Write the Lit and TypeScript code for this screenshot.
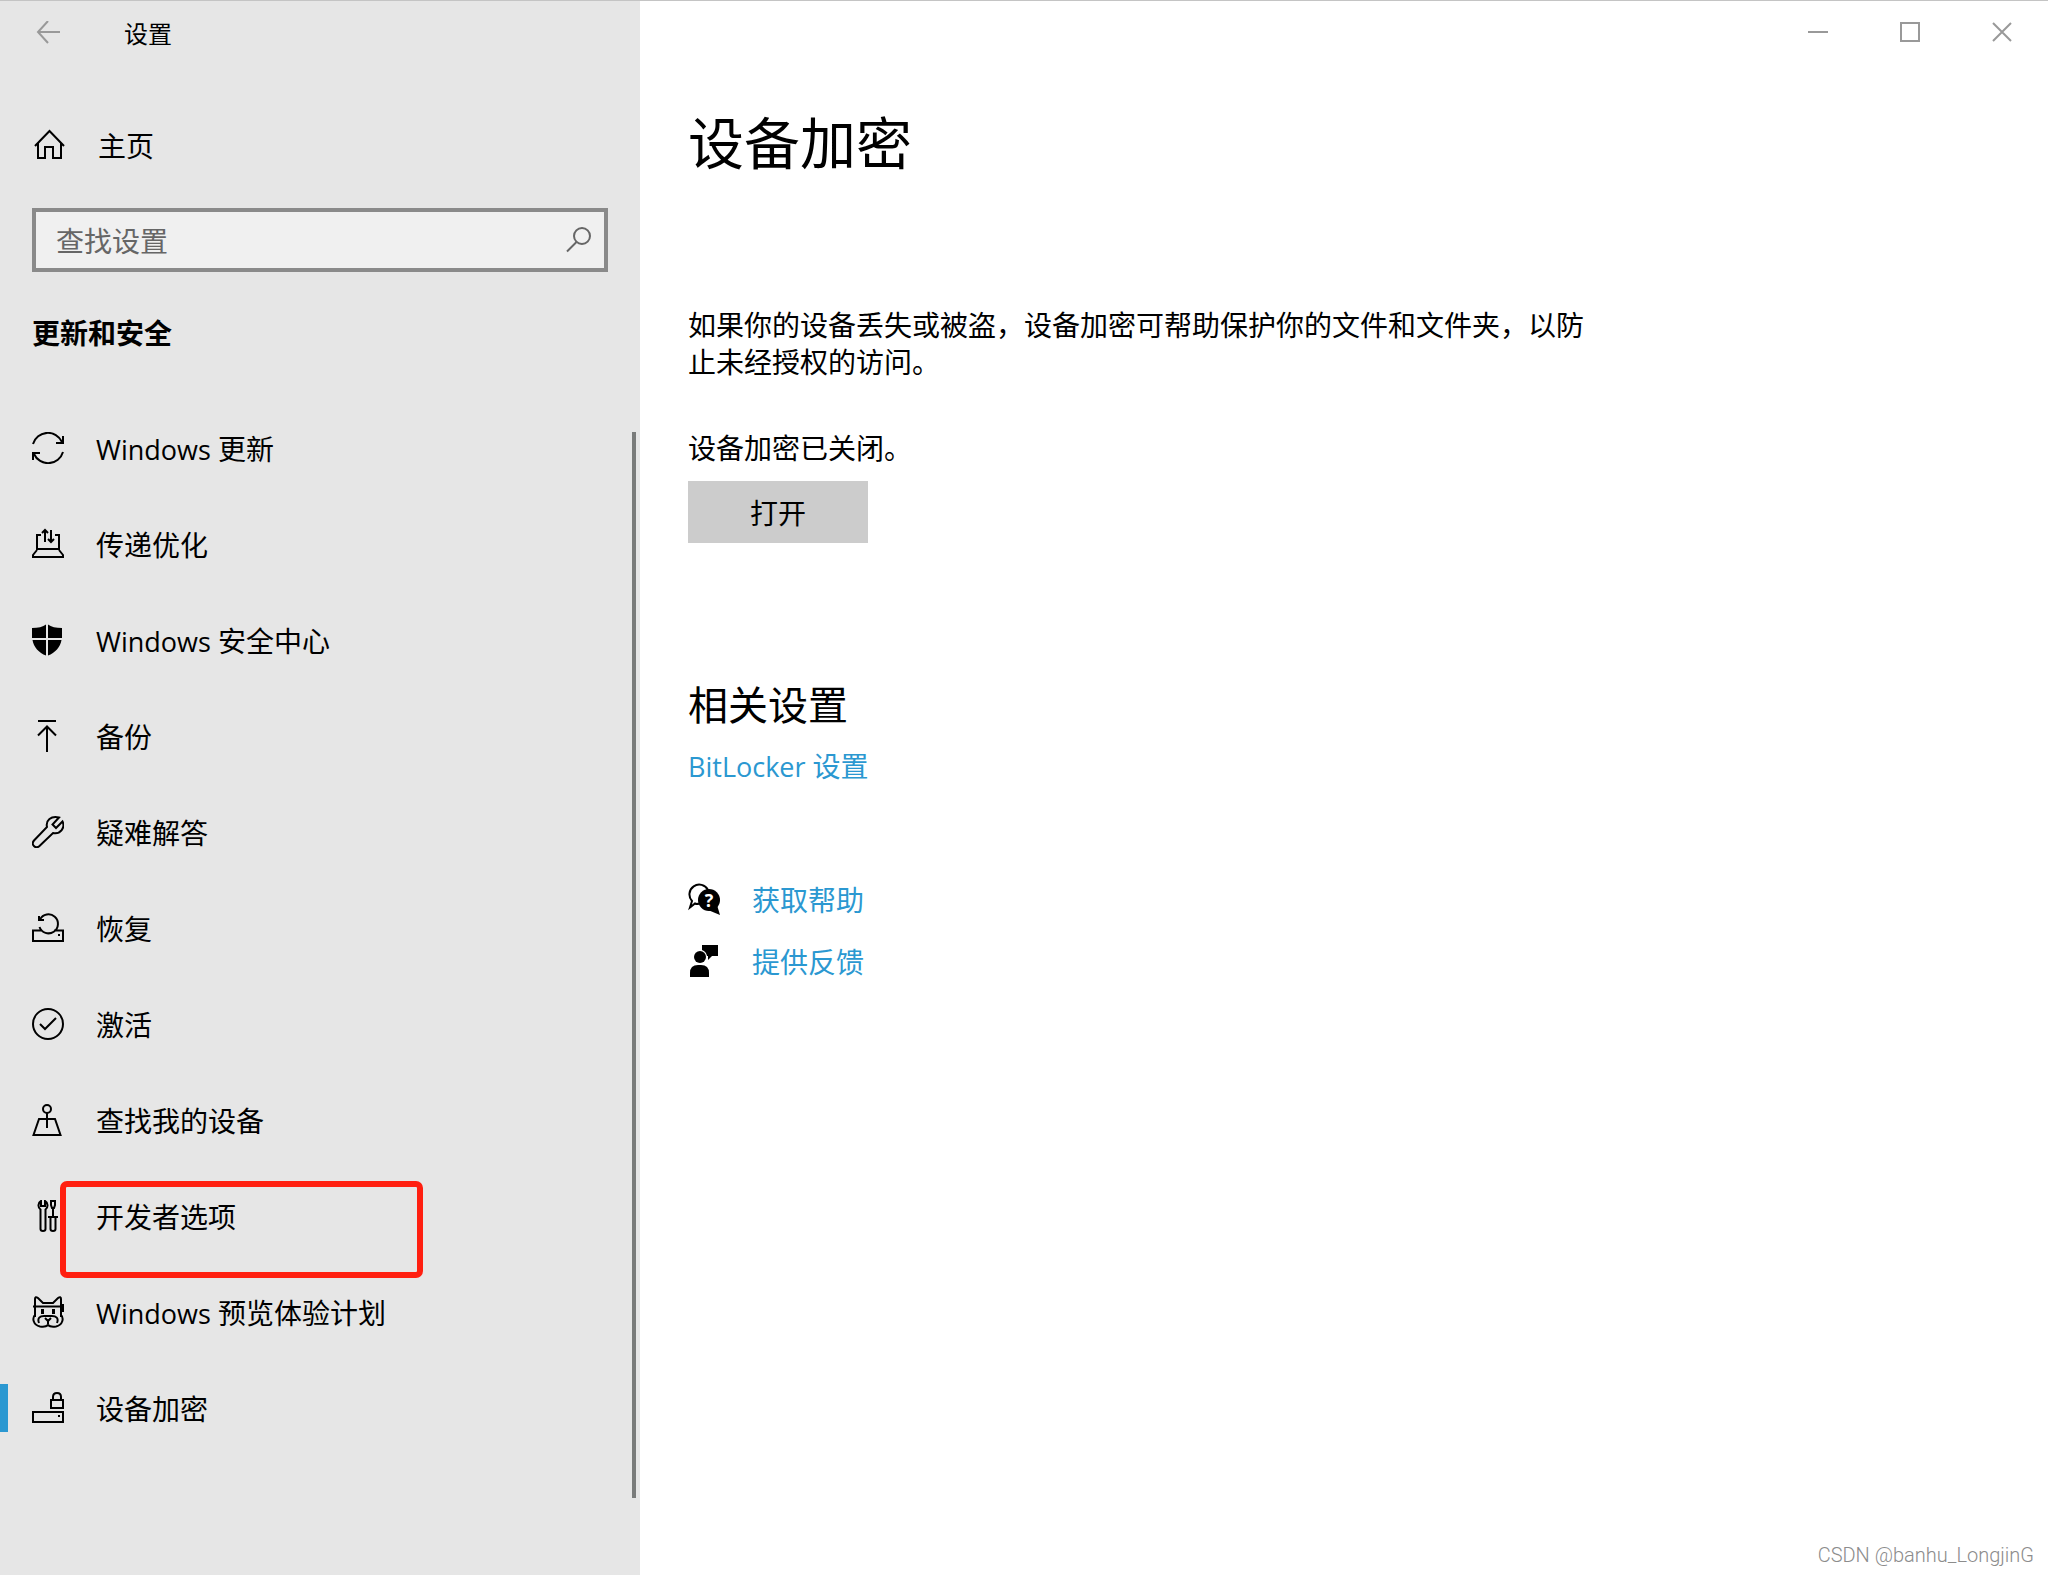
import { LitElement, html, css, svg, nothing } from "lit";
import type { SVGTemplateResult } from "lit";
import { customElement } from "lit/decorators.js";
import { classMap } from "lit/directives/class-map.js";

interface NavItem {
  latin?: string;
  label: string;
  icon: SVGTemplateResult;
  current?: boolean;
  marked?: boolean;
}

const icons = {
  sync: svg`<path d="M1 12A15.500 15.500 0 0 1 30 10M31 4v7h-7M31 20A15.500 15.500 0 0 1 2 22M1 28v-7h7"/>`,
  delivery: svg`<path d="M9 7H5v14M23 7h4v14M4 21h24M5 22l-4 5v2h30v-2l-4-5M13 2v12M10 5l3-3 3 3M19 2v12M16 11l3 3 3-3"/>`,
  shield: svg`<path class="solid" d="M14 0.500C11 3 6 4 0 4v10h14zM16 0.500C19 3 24 4 30 4v10H16zM0.500 16H14v15.500C7 29 1.500 23 0.500 16zM29.500 16H16v15.500C23 29 28.500 23 29.500 16z"/>`,
  backup: svg`<path d="M6 1h18M15 6v26M6 15.500L15 6.500l9 9"/>`,
  wrench: svg`<path d="M15 11C13.500 4.500 19-0.500 27 1.500L20.500 8.500l3.500 3.500 6.500-6.500c3 6-2 13-9.500 11.500L7.500 30c-4 3.500-9-1.500-5.500-5.500z"/>`,
  recovery: svg`<path d="M7 4v4h5M8 7.500A9.500 9.500 0 1 1 7.500 15M10 18.500H1V29h30V18.500H22"/><path class="solid" d="M26 22h2v2h-2z"/>`,
  activate: svg`<circle cx="16" cy="16" r="15"/><path d="M8 16l5 5 11-11"/>`,
  locate: svg`<circle cx="15" cy="5" r="4"/><path d="M15 9v15M7 15L1.500 31h27L23 15z"/>`,
  tools: svg`<path d="M8.500 9.500V29q0 2 2.500 2t2.500-2V9.500c3-2 2.500-7 -0.500-8.500v5h-4v-5c-3 1.500-3.500 6.500-0.500 8.500zM19 1h4v4l-1 3h-2l-1-3zM21 8v9M16 17h10M18.500 17v12q0 2 2.500 2t2.500-2V17"/>`,
  cat: svg`<path d="M3 21V3q0-3 3-1l5 5h10l5-5q3-2 3 1v18M1 10.500h30M31 8v8M3 19c-3 3-2 10 5 11.500 3 .5 6 .5 8-1.500 2 2 5 2 8 1.500 7-1.500 8-8.500 5-11.500M7 27c-2-5 1-7 5-7h8c4 0 7 2 5 7M16 28v-3M13 22l3 3 3-3"/><path class="solid" d="M9 13h3v5H9zM20 13h3v5h-3z"/>`,
  driveLock: svg`<path d="M19 8h12v8H19zM21 8V5q0-4 4-4t4 4v3M1 20h30v10H1z"/><path class="solid" d="M26 23h2v2h-2z"/>`,
};

const NAV: NavItem[] = [
  { latin: "Windows ", label: "更新", icon: icons.sync },
  { label: "传递优化", icon: icons.delivery },
  { latin: "Windows ", label: "安全中心", icon: icons.shield },
  { label: "备份", icon: icons.backup },
  { label: "疑难解答", icon: icons.wrench },
  { label: "恢复", icon: icons.recovery },
  { label: "激活", icon: icons.activate },
  { label: "查找我的设备", icon: icons.locate },
  { label: "开发者选项", icon: icons.tools, marked: true },
  { latin: "Windows ", label: "预览体验计划", icon: icons.cat },
  { label: "设备加密", icon: icons.driveLock, current: true },
];

@customElement("app-root")
export class AppRoot extends LitElement {
  static styles = css`
    :host {
      display: block;
      font-family: "Noto Sans CJK SC", sans-serif;
      font-size: 28px;
      line-height: 36px;
      color: #000;
    }
    *,
    ::before,
    ::after {
      box-sizing: border-box;
    }
    h1,
    h2,
    p,
    ul {
      margin: 0;
      padding: 0;
    }
    a {
      color: inherit;
      text-decoration: none;
    }
    button {
      border: 0;
      padding: 0;
      background: none;
      font: inherit;
      color: inherit;
    }
    svg {
      display: block;
      flex: none;
      fill: none;
      stroke: currentColor;
      stroke-width: 2;
    }
    .solid {
      fill: currentColor;
      stroke: none;
    }
    .latin {
      font-family: "Open Sans", sans-serif;
      font-size: 27px;
      line-height: 1;
      white-space: pre;
    }
    .window {
      position: relative;
      display: flex;
      min-height: 100vh;
      background: #fff;
      border-top: 1px solid #c4c4c4;
    }
    .sidebar {
      flex: 0 0 640px;
      display: flex;
      flex-direction: column;
      background: #e6e6e6;
    }
    .titlebar {
      display: flex;
      align-items: center;
      gap: 64px;
      height: 64px;
      padding-left: 36px;
      font-size: 24px;
    }
    .back {
      color: #999;
    }
    .home {
      display: flex;
      align-items: center;
      gap: 32px;
      height: 96px;
      margin-top: 32px;
      padding: 0 32px;
    }
    .search {
      display: flex;
      align-items: center;
      height: 64px;
      margin: 15px 32px 0;
      padding: 0 12px 0 20px;
      border: 4px solid #8a8a8a;
      background: #f0f0f0;
      color: #666;
    }
    .search input {
      flex: 1;
      min-width: 0;
      padding: 0;
      border: 0;
      outline: 0;
      background: none;
      font: inherit;
      color: #666;
    }
    .search input::placeholder {
      color: #666;
      opacity: 1;
    }
    .section {
      height: 128px;
      padding: 42px 32px 0;
      font-size: 28px;
      font-weight: 700;
      line-height: 36px;
    }
    .scroller {
      flex: 1;
      display: flex;
      padding-right: 4px;
    }
    .nav {
      flex: 1;
    }
    .nav ul {
      list-style: none;
    }
    .nav li {
      position: relative;
    }
    .nav a {
      display: flex;
      align-items: center;
      gap: 32px;
      height: 96px;
      padding: 0 32px;
    }
    .current::before {
      content: "";
      position: absolute;
      left: 0;
      top: 24px;
      width: 8px;
      height: 48px;
      background: #2b98d1;
    }
    .marked::after {
      content: "";
      position: absolute;
      left: 60px;
      top: 13px;
      width: 363px;
      height: 97px;
      border: 6px solid #ff1f10;
      border-radius: 7px;
      pointer-events: none;
    }
    .thumb {
      width: 4px;
      margin: 32px 0 77px;
      background: #7a7c7b;
    }
    .content {
      flex: 1;
      min-width: 0;
      display: flex;
      flex-direction: column;
      padding-left: 48px;
    }
    .controls {
      display: flex;
      justify-content: flex-end;
      height: 62px;
      margin-bottom: 41px;
      color: #999;
    }
    .controls button {
      display: grid;
      place-items: center;
      width: 92px;
    }
    h1 {
      font-size: 56px;
      font-weight: 400;
      line-height: 72px;
    }
    .intro {
      max-width: 912px;
      margin-top: 130px;
      line-height: 37px;
    }
    .status {
      margin-top: 49px;
    }
    .action {
      width: 180px;
      height: 62px;
      margin-top: 16px;
      background: #ccc;
    }
    .subhead {
      font-size: 40px;
      font-weight: 400;
      line-height: 48px;
      margin-top: 136px;
    }
    .link {
      color: #2b98d1;
    }
    .related {
      margin-top: 20px;
    }
    .support {
      display: flex;
      flex-direction: column;
      gap: 26px;
      margin-top: 98px;
    }
    .support a {
      display: flex;
      align-items: center;
      align-self: flex-start;
      gap: 32px;
    }
    .support svg {
      color: #000;
    }
    .badge {
      fill: #fff;
      stroke: none;
      font: 700 18px "Open Sans", sans-serif;
      text-anchor: middle;
    }
    .watermark {
      position: absolute;
      right: 14px;
      bottom: 8px;
      font: 20px/24px Roboto, sans-serif;
      font-weight: 300;
      color: #8c8c8c;
    }
  `;

  private icon(body: SVGTemplateResult, size = 32) {
    return html`<svg width=${size} height=${size} viewBox="0 0 ${size} ${size}" aria-hidden="true">${body}</svg>`;
  }

  private navItem(item: NavItem) {
    return html`<li class=${classMap({ current: !!item.current, marked: !!item.marked })}>
      <a href="#" aria-current=${item.current ? "page" : nothing}>
        ${this.icon(item.icon)}
        <span>${item.latin ? html`<span class="latin">${item.latin}</span>` : nothing}${item.label}</span>
      </a>
    </li>`;
  }

  render() {
    return html`<div class="window" lang="zh-CN">
      <aside class="sidebar">
        <div class="titlebar">
          <button class="back" aria-label="返回">
            ${this.icon(svg`<path d="M2 11h22M12 0L2 11l10 11"/>`, 24)}
          </button>
          <span>设置</span>
        </div>
        <a class="home" href="#">
          ${this.icon(svg`<path d="M3 18L17.500 3 32 18M6 15.500V30h7V19h8v11h8V15.500"/>`, 34)}
          <span>主页</span>
        </a>
        <label class="search">
          <input type="text" placeholder="查找设置" aria-label="查找设置" />
          ${this.icon(svg`<circle cx="16" cy="9" r="8"/><path d="M10.500 15L1 24.500"/>`, 26)}
        </label>
        <h2 class="section">更新和安全</h2>
        <div class="scroller">
          <nav class="nav">
            <ul>
              ${NAV.map((item) => this.navItem(item))}
            </ul>
          </nav>
          <div class="thumb"></div>
        </div>
      </aside>
      <main class="content">
        <div class="controls">
          <button aria-label="最小化">${this.icon(svg`<path d="M0 10h20"/>`, 20)}</button>
          <button aria-label="最大化">${this.icon(svg`<path d="M1 1h18v18H1z"/>`, 20)}</button>
          <button aria-label="关闭">${this.icon(svg`<path d="M1 1l18 18M19 1L1 19"/>`, 20)}</button>
        </div>
        <h1>设备加密</h1>
        <p class="intro">
          如果你的设备丢失或被盗，设备加密可帮助保护你的文件和文件夹，以防止未经授权的访问。
        </p>
        <p class="status">设备加密已关闭。</p>
        <button class="action">打开</button>
        <h2 class="subhead">相关设置</h2>
        <p class="related"><a class="link" href="#"><span class="latin">BitLocker </span>设置</a></p>
        <div class="support">
          <a class="link" href="#">
            ${this.icon(svg`<path d="M11 20.500C10 21 8 21 7 20.500L2 24.500 4 18A9.800 9.800 0 1 1 20 7"/><circle class="solid" cx="21" cy="17" r="11"/><path class="solid" d="M20 27l12 5-3-10z"/><text class="badge" x="21" y="24">?</text>`)}
            <span>获取帮助</span>
          </a>
          <a class="link" href="#">
            ${this.icon(svg`<path class="solid" d="M14 0h16v11h-6l-4 4v-4h-1a8 8 0 0 0-5-6z"/><circle class="solid" cx="12" cy="12" r="6"/><path class="solid" d="M2 32v-4q0-8 8-8h3q8 0 8 8v4z"/>`)}
            <span>提供反馈</span>
          </a>
        </div>
      </main>
      <div class="watermark">CSDN @banhu_LongjinG</div>
    </div>`;
  }
}
